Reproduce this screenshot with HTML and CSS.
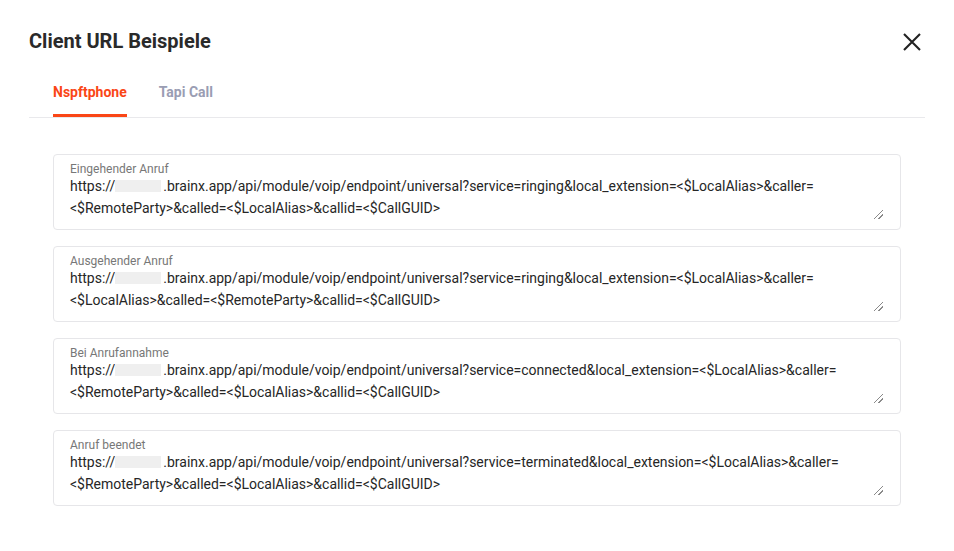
FILE: index.html
```html
<!DOCTYPE html>
<html lang="de">
<head>
  <meta charset="UTF-8" />
  <meta name="viewport" content="width=device-width, initial-scale=1.0"/>
  <title>Client URL Beispiele</title>
  <link rel="stylesheet" href="styles.css">
</head>
<body>

  <div class="dialog">
    <div class="dialog-header">
      <h2 class="dialog-title">Client URL Beispiele</h2>
      <button class="close" aria-label="Schließen">
        <svg width="18" height="18" viewBox="0 0 18 18">
          <path d="M1 1L17 17M17 1L1 17" stroke="#222" stroke-width="2.1" fill="none"/>
        </svg>
      </button>
    </div>

    <div class="tabs">
      <div class="tab active">Nspftphone</div>
      <div class="tab">Tapi Call</div>
    </div>

    <div class="fields">
      <div class="field">
        <div class="field-label">Eingehender Anruf</div>
        <div class="field-input">
          <div class="line">https://<span class="redacted"></span>.brainx.app/api/module/voip/endpoint/universal?service=ringing&amp;local_extension=&lt;$LocalAlias&gt;&amp;caller=</div>
          <div class="line">&lt;$RemoteParty&gt;&amp;called=&lt;$LocalAlias&gt;&amp;callid=&lt;$CallGUID&gt;</div>
          <span class="resize"></span>
        </div>
      </div>

      <div class="field">
        <div class="field-label">Ausgehender Anruf</div>
        <div class="field-input">
          <div class="line">https://<span class="redacted"></span>.brainx.app/api/module/voip/endpoint/universal?service=ringing&amp;local_extension=&lt;$LocalAlias&gt;&amp;caller=</div>
          <div class="line">&lt;$LocalAlias&gt;&amp;called=&lt;$RemoteParty&gt;&amp;callid=&lt;$CallGUID&gt;</div>
          <span class="resize"></span>
        </div>
      </div>

      <div class="field">
        <div class="field-label">Bei Anrufannahme</div>
        <div class="field-input">
          <div class="line">https://<span class="redacted"></span>.brainx.app/api/module/voip/endpoint/universal?service=connected&amp;local_extension=&lt;$LocalAlias&gt;&amp;caller=</div>
          <div class="line">&lt;$RemoteParty&gt;&amp;called=&lt;$LocalAlias&gt;&amp;callid=&lt;$CallGUID&gt;</div>
          <span class="resize"></span>
        </div>
      </div>

      <div class="field">
        <div class="field-label">Anruf beendet</div>
        <div class="field-input">
          <div class="line">https://<span class="redacted"></span>.brainx.app/api/module/voip/endpoint/universal?service=terminated&amp;local_extension=&lt;$LocalAlias&gt;&amp;caller=</div>
          <div class="line">&lt;$RemoteParty&gt;&amp;called=&lt;$LocalAlias&gt;&amp;callid=&lt;$CallGUID&gt;</div>
          <span class="resize"></span>
        </div>
      </div>
    </div>
  </div>

</body>
</html>
```

FILE: styles.css
```css
* {
  box-sizing: border-box;
}

body {
  margin: 0;
  background-color: #fff;
  color: #222;
  font-family: Roboto, 'Liberation Sans', sans-serif;
}

.dialog {
  width: 954px;
  height: 551px;
  padding: 29px 29px 0 29px;
  background: #fff;
}

.dialog-header {
  display: flex;
  justify-content: space-between;
  align-items: center;
  height: 24px;
}

.dialog-title {
  margin: 0;
  font-size: 20px;
  line-height: 24px;
  font-weight: 700;
  color: #2a2a2a;
}

.close {
  border: none;
  background: none;
  padding: 0;
  margin-right: 4px;
  margin-top: 1px;
  width: 18px;
  height: 18px;
  cursor: pointer;
}

.close svg {
  display: block;
}

.tabs {
  display: flex;
  gap: 32px;
  padding: 29px 24px 0 24px;
  border-bottom: 1px solid #e9e9ec;
}

.tab {
  font-size: 14px;
  line-height: 20px;
  font-weight: 700;
  color: #9a9db3;
  padding-bottom: 12px;
  border-bottom: 3px solid transparent;
}

.tab.active {
  color: #fa4616;
  border-bottom-color: #fa4616;
}

.fields {
  display: flex;
  flex-direction: column;
  gap: 16px;
  padding: 36px 24px 0 24px;
}

.field {
  border: 1px solid #e6e6e9;
  border-radius: 4px;
  height: 76px;
  padding: 7px 17px 0 16px;
}

.field-label {
  font-size: 12px;
  line-height: 14px;
  color: #777;
}

.field-input {
  position: relative;
  height: 44px;
  font-size: 14px;
  line-height: 22px;
  color: #262626;
  margin-top: -1px;
  letter-spacing: -0.01px;
}

.line {
  white-space: nowrap;
}

.redacted {
  display: inline-block;
  width: 46px;
  height: 12px;
  margin: 0 2px 0 0;
  background: #efefef;
  vertical-align: -1px;
}

.resize {
  position: absolute;
  right: 0;
  bottom: 0;
  width: 9px;
  height: 9px;
  background:
    linear-gradient(135deg, transparent 46%, #8a8a8a 46%, #8a8a8a 54%, transparent 54%) no-repeat 0 0 / 9px 9px,
    linear-gradient(135deg, transparent 72%, #8a8a8a 72%, #8a8a8a 80%, transparent 80%) no-repeat 0 0 / 9px 9px;
}
```
